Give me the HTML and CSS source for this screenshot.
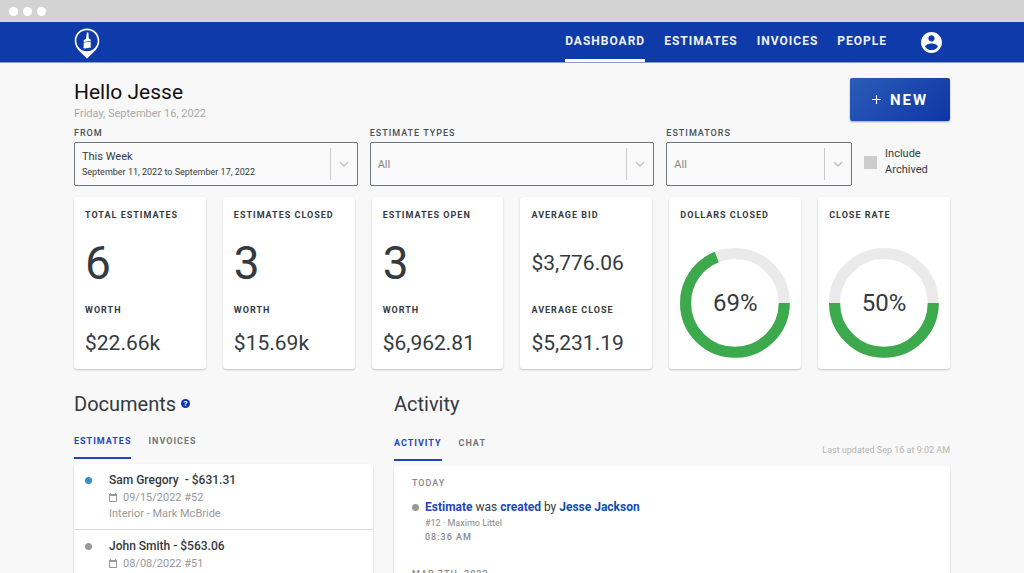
FILE: index.html
```html
<!DOCTYPE html>
<html lang="en">
<head>
<meta charset="utf-8">
<meta name="viewport" content="width=device-width, initial-scale=1">
<title>Dashboard</title>
<link rel="stylesheet" href="styles.css">
</head>
<body>
<div class="window">
  <div class="titlebar"><span class="dot"></span><span class="dot"></span><span class="dot"></span></div>

  <header class="navbar">
    <a class="logo" href="#" aria-label="Home">
      <svg viewBox="0 0 26 31" width="26" height="31">
        <path fill="#fff" fill-rule="evenodd" d="M13 .5C6 .5.7 5.900.7 12.700c0 4.600 2.200 8 5.500 11.300L13 30.500l6.800-6.500c3.300-3.300 5.500-6.700 5.500-11.300C25.300 5.900 20 .5 13 .5zm0 1.700c6 0 10.700 4.700 10.700 10.500S19 23.200 13 23.200 2.300 18.500 2.300 12.700 7 2.200 13 2.200z"/>
        <path fill="#fff" d="M12.900 4.500h1.500l.4 6 1.900.9v1.700l-7 .8v-1.700l2.300-1.500z"/>
        <path fill="#fff" d="M9.700 14.600l7-.8v6.100l-1.700-.3-.8.600-1.400-.2-1.100.6-2.400-.3.400-1.900z"/>
      </svg>
    </a>
    <nav class="menu">
      <a class="menu-link is-active" href="#">DASHBOARD</a>
      <a class="menu-link" href="#">ESTIMATES</a>
      <a class="menu-link" href="#">INVOICES</a>
      <a class="menu-link" href="#">PEOPLE</a>
    </nav>
    <button class="account" type="button" aria-label="Account">
      <svg viewBox="2 2 20 20" width="21" height="21"><path fill="#fff" d="M12 2C6.480 2 2 6.480 2 12s4.480 10 10 10 10-4.480 10-10S17.520 2 12 2zm0 3c1.660 0 3 1.340 3 3s-1.340 3-3 3-3-1.340-3-3 1.340-3 3-3zm0 14.200c-2.500 0-4.710-1.280-6-3.220.03-1.990 4-3.080 6-3.080 1.990 0 5.970 1.090 6 3.080-1.290 1.940-3.500 3.220-6 3.220z"/></svg>
    </button>
  </header>

  <main class="page">
    <div class="intro">
      <div>
        <h1 class="greeting">Hello Jesse</h1>
        <p class="today">Friday, September 16, 2022</p>
      </div>
      <button class="new-button" type="button">
        <svg viewBox="0 0 9 9" width="9" height="9"><path stroke="#fff" stroke-width="1.200" d="M4.500 0v9M0 4.500h9"/></svg>
        NEW
      </button>
    </div>

    <form class="filters">
      <div class="field">
        <label class="caption" for="range">FROM</label>
        <div class="picker">
          <button class="picker-control" id="range" type="button" aria-haspopup="dialog">
            <span class="range-name">This Week</span>
            <span class="range-dates">September 11, 2022 to September 17, 2022</span>
          </button>
          <span class="picker-arrow"><svg viewBox="0 0 10 6" width="10" height="6"><path d="M1 1l4 4 4-4"/></svg></span>
        </div>
      </div>
      <div class="field">
        <label class="caption" for="types">ESTIMATE TYPES</label>
        <div class="picker">
          <select class="picker-control" id="types"><option>All</option></select>
          <span class="picker-arrow"><svg viewBox="0 0 10 6" width="10" height="6"><path d="M1 1l4 4 4-4"/></svg></span>
        </div>
      </div>
      <div class="field">
        <label class="caption" for="estimators">ESTIMATORS</label>
        <div class="picker">
          <select class="picker-control" id="estimators"><option>All</option></select>
          <span class="picker-arrow"><svg viewBox="0 0 10 6" width="10" height="6"><path d="M1 1l4 4 4-4"/></svg></span>
        </div>
      </div>
      <label class="archived"><input class="archived-box" type="checkbox"><span>Include Archived</span></label>
    </form>

    <section class="stats">
      <article class="card stat">
        <h2 class="stat-label">TOTAL ESTIMATES</h2><p class="stat-count">6</p>
        <h3 class="stat-label">WORTH</h3><p class="stat-amount">$22.66k</p>
      </article>
      <article class="card stat">
        <h2 class="stat-label">ESTIMATES CLOSED</h2><p class="stat-count">3</p>
        <h3 class="stat-label">WORTH</h3><p class="stat-amount">$15.69k</p>
      </article>
      <article class="card stat">
        <h2 class="stat-label">ESTIMATES OPEN</h2><p class="stat-count">3</p>
        <h3 class="stat-label">WORTH</h3><p class="stat-amount">$6,962.81</p>
      </article>
      <article class="card stat">
        <h2 class="stat-label">AVERAGE BID</h2><p class="stat-amount is-upper">$3,776.06</p>
        <h3 class="stat-label">AVERAGE CLOSE</h3><p class="stat-amount">$5,231.19</p>
      </article>
      <article class="card stat">
        <h2 class="stat-label">DOLLARS CLOSED</h2>
        <div class="donut">
          <svg class="donut-ring" viewBox="0 0 109 109"><circle class="ring-track" cx="54.500" cy="54.500" r="49"/><circle class="ring-value" cx="54.500" cy="54.500" r="49" pathLength="100" stroke-dasharray="69 31"/></svg>
          <span class="donut-text">69%</span>
        </div>
      </article>
      <article class="card stat">
        <h2 class="stat-label">CLOSE RATE</h2>
        <div class="donut">
          <svg class="donut-ring" viewBox="0 0 109 109"><circle class="ring-track" cx="54.500" cy="54.500" r="49"/><circle class="ring-value" cx="54.500" cy="54.500" r="49" pathLength="100" stroke-dasharray="50 50"/></svg>
          <span class="donut-text">50%</span>
        </div>
      </article>
    </section>

    <div class="panels">
      <section class="documents">
        <h2 class="panel-title">Documents
          <button class="help" type="button" aria-label="Help">?</button>
        </h2>
        <div class="tabs">
          <button class="tab is-active" type="button">ESTIMATES</button>
          <button class="tab" type="button">INVOICES</button>
        </div>
        <ul class="card doc-list">
          <li class="doc">
            <span class="bullet is-blue"></span>
            <div>
              <p class="doc-name">Sam Gregory&nbsp; - $631.31</p>
              <p class="doc-meta"><svg viewBox="0 0 8 9" width="8" height="9"><path fill="none" stroke="#999" d="M.5 1.500h7v7h-7z"/><path fill="#999" d="M0 1h8v2H0zM1 0h1v1H1zM6 0h1v1H6z"/></svg>09/15/2022 #52</p>
              <p class="doc-meta">Interior - Mark McBride</p>
            </div>
          </li>
          <li class="doc">
            <span class="bullet"></span>
            <div>
              <p class="doc-name">John Smith - $563.06</p>
              <p class="doc-meta"><svg viewBox="0 0 8 9" width="8" height="9"><path fill="none" stroke="#999" d="M.5 1.500h7v7h-7z"/><path fill="#999" d="M0 1h8v2H0zM1 0h1v1H1zM6 0h1v1H6z"/></svg>08/08/2022 #51</p>
            </div>
          </li>
        </ul>
      </section>

      <section class="activity">
        <h2 class="panel-title">Activity</h2>
        <div class="activity-bar">
          <div class="tabs">
            <button class="tab is-active" type="button">ACTIVITY</button>
            <button class="tab" type="button">CHAT</button>
          </div>
          <p class="updated">Last updated Sep 16 at 9:02 AM</p>
        </div>
        <div class="card feed">
          <h3 class="feed-day">TODAY</h3>
          <div class="event">
            <span class="bullet"></span>
            <div>
              <p class="event-text"><a href="#">Estimate</a> was <a href="#">created</a> by <a class="person" href="#">Jesse Jackson</a></p>
              <p class="event-job">#12 · Maximo Littel</p>
              <p class="event-time">08:36 AM</p>
            </div>
          </div>
          <h3 class="feed-day">MAR 7TH, 2022</h3>
        </div>
      </section>
    </div>
  </main>
</div>
</body>
</html>
```
FILE: styles.css
```css
* { box-sizing: border-box; }

body, h1, h2, h3, p, ul { margin: 0; padding: 0; }

body {
  background: #f8f8f8;
  color: #343a40;
  font-family: Roboto, "Liberation Sans", sans-serif;
  font-size: 11px;
}

button, select {
  border: 0;
  padding: 0;
  background: none;
  color: inherit;
  font: inherit;
  text-align: left;
}

a { text-decoration: none; }
svg { display: block; }

.window {
  display: flex;
  flex-direction: column;
  height: 100vh;
  overflow: hidden;
}

.titlebar {
  display: flex;
  flex: none;
  align-items: center;
  gap: 5px;
  height: 22px;
  padding-left: 9px;
  background: #d3d3d3;
}

.dot {
  width: 9px;
  height: 9px;
  border-radius: 50%;
  background: #fff;
}

.navbar {
  display: flex;
  flex: none;
  align-items: stretch;
  height: 41px;
  padding: 0 82px 0 74px;
  background: #0f3aa9;
  border-bottom: 1px solid #8f9cc9;
}

.logo { padding-top: 6px; }

.menu {
  display: flex;
  gap: 19px;
  margin-left: auto;
}

.menu-link {
  padding-top: 12px;
  border-bottom: 3px solid transparent;
  color: #eef1fa;
  font-size: 12px;
  font-weight: 700;
  letter-spacing: 1px;
  line-height: 14px;
}

.menu-link.is-active { border-color: #fff; }

.account { margin-left: 34px; }

.page { padding: 15px 74px 0; }

.intro {
  display: flex;
  justify-content: space-between;
  align-items: flex-start;
}

.greeting {
  padding-top: 1px;
  color: #111;
  font-size: 21px;
  font-weight: 400;
  line-height: 26px;
}

.today {
  color: #aaa;
  font-size: 11px;
  line-height: 18px;
}

.new-button {
  display: flex;
  align-items: center;
  justify-content: center;
  gap: 9px;
  width: 100px;
  height: 43px;
  border-radius: 2px;
  background: linear-gradient(135deg, #2b5cb8, #0f36a5);
  box-shadow: 0 1px 2px rgba(0, 0, 0, .35);
  color: #fff;
  font-size: 15px;
  font-weight: 700;
  letter-spacing: 2px;
}

.filters {
  display: grid;
  grid-template-columns: 284fr 285fr 186fr 86fr;
  gap: 12px;
  margin-top: 4px;
}

.caption {
  display: block;
  margin-bottom: 3px;
  color: #495057;
  font-size: 9px;
  font-weight: 500;
  letter-spacing: 1px;
  line-height: 12px;
}

.picker {
  display: grid;
  height: 44px;
  border: 1px solid #6c757d;
  border-radius: 2px;
  background: #fafafa;
}

.picker > * { grid-area: 1 / 1; }

.picker-control {
  appearance: none;
  width: 100%;
  padding: 0 30px 0 7px;
  border-radius: 0;
}

select.picker-control { color: #868686; }

.range-name, .range-dates { display: block; }
.range-name { line-height: 17px; }
.range-dates { font-size: 9px; line-height: 15px; }

.picker-arrow {
  display: flex;
  align-items: center;
  justify-content: center;
  justify-self: end;
  width: 27px;
  margin: 5px 0;
  border-left: 1px solid #ccc;
  pointer-events: none;
}

.picker-arrow path { fill: none; stroke: #bbb; stroke-width: 1.3; }

.archived {
  display: flex;
  align-items: center;
  align-self: end;
  gap: 8px;
  height: 40px;
  margin-bottom: 4px;
  line-height: 16px;
}

.archived-box {
  appearance: none;
  flex: none;
  width: 13px;
  height: 13px;
  margin: 0;
  background: #ccc;
}

.stats {
  display: grid;
  grid-template-columns: repeat(6, 1fr);
  gap: 17px;
  margin-top: 11px;
}

.card {
  border-radius: 3px;
  background: #fff;
  box-shadow: 0 1px 2px rgba(0, 0, 0, .22);
}

.stat { padding: 12px 11px 11px; }

.stat-label {
  font-size: 9px;
  font-weight: 700;
  letter-spacing: 1px;
  line-height: 12px;
  white-space: nowrap;
}

.stat-count {
  margin: 16px 0 15px;
  font-size: 46px;
  line-height: 52px;
}

.stat-amount {
  margin-top: 15px;
  font-size: 21px;
  line-height: 24px;
}

.stat-amount.is-upper { margin: 16px 0 15px; line-height: 52px; }

.donut {
  display: grid;
  place-items: center;
  margin-top: 27px;
}

.donut > * { grid-area: 1 / 1; }
.donut-ring { width: 100%; }
.donut-ring circle { fill: none; stroke-width: 11; }
.ring-track { stroke: #eaeaea; }
.ring-value { stroke: #3ba94c; }
.donut-text { font-size: 24px; }

.panels {
  display: grid;
  grid-template-columns: 299fr 556fr;
  gap: 21px;
  margin-top: 23px;
}

.panel-title {
  display: flex;
  align-items: center;
  gap: 5px;
  font-size: 20px;
  font-weight: 400;
  line-height: 24px;
}

.help {
  width: 9px;
  height: 9px;
  border-radius: 50%;
  background: #0f36b0;
  color: #fff;
  font-size: 8px;
  font-weight: 700;
  line-height: 9px;
  text-align: center;
}

.tabs { display: flex; gap: 17px; }

.documents .tabs { margin: 19px 0 5px; }

.tab {
  padding-bottom: 10px;
  border-bottom: 2px solid transparent;
  color: #777;
  font-size: 9px;
  font-weight: 700;
  letter-spacing: 1px;
  line-height: 12px;
}

.tab.is-active { border-color: #1f45bd; color: #1f45bd; }

.doc-list { list-style: none; }

.doc {
  display: flex;
  gap: 17px;
  padding: 8px 11px 7px;
  border-bottom: 1px solid #ddd;
}

.bullet {
  flex: none;
  width: 7px;
  height: 7px;
  margin-top: 5px;
  border-radius: 50%;
  background: #999;
}

.bullet.is-blue { background: #3590c8; }

.doc-name {
  margin-bottom: 2px;
  font-size: 12px;
  font-weight: 500;
  line-height: 16px;
}

.doc-meta {
  display: flex;
  align-items: center;
  gap: 6px;
  color: #999;
  line-height: 16px;
}

.activity-bar {
  display: flex;
  align-items: center;
  justify-content: space-between;
  margin: 21px 0 5px;
}

.updated { padding-top: 3px; color: #b5b5b5; font-size: 9px; }

.feed { min-height: 200px; padding: 11px 18px; }

.feed-day {
  color: #888;
  font-size: 9px;
  font-weight: 500;
  letter-spacing: 1px;
  line-height: 12px;
}

.event {
  display: flex;
  gap: 6px;
  margin: 10px 0 25px;
}

.event-text { font-size: 12px; line-height: 16px; }
.event-text a { color: #1f45bd; font-weight: 700; }
.event-text .person { color: #0b4fb0; }
.event-job { color: #888; font-size: 9px; line-height: 16px; }

.event-time {
  color: #888;
  font-size: 9px;
  font-weight: 500;
  letter-spacing: 1px;
  line-height: 12px;
}
```
